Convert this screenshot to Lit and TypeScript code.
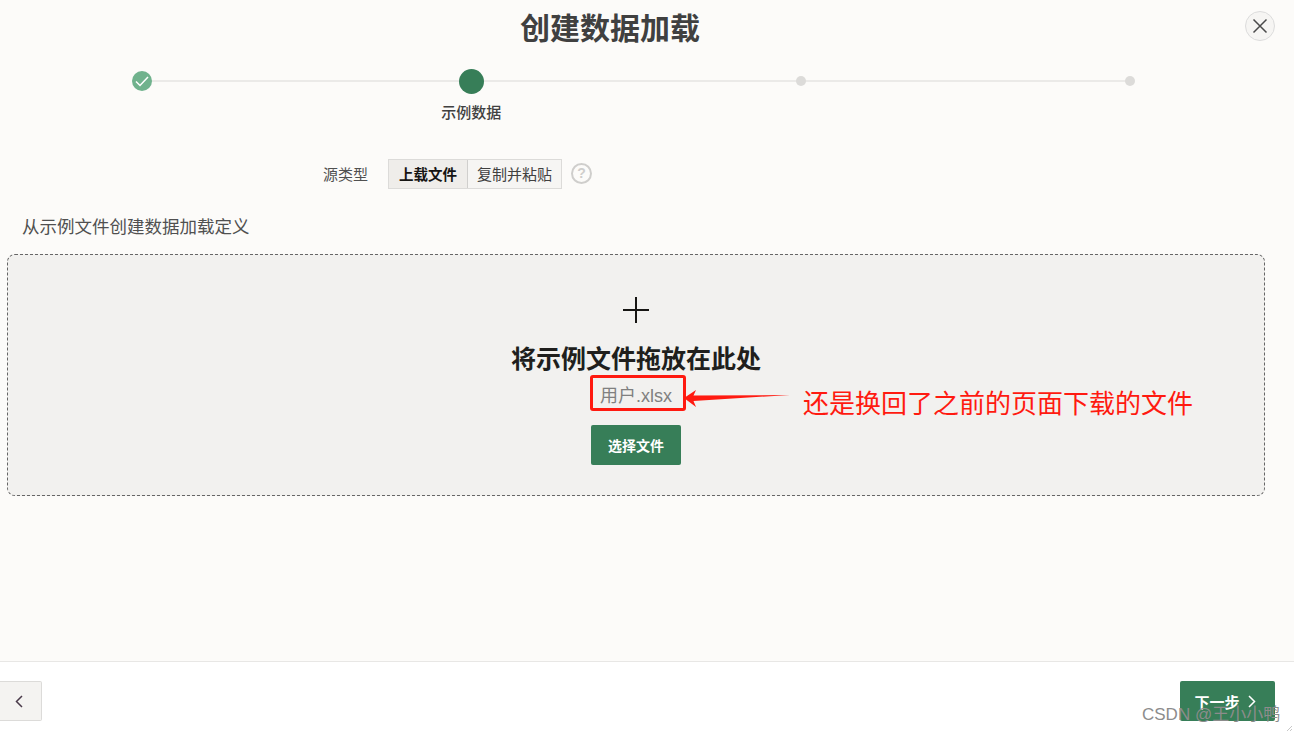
import { LitElement, html, css } from 'lit';
import { customElement } from 'lit/decorators.js';

@customElement('app-root')
export class AppRoot extends LitElement {
  static styles = css`
    :host {
      display: flex;
      flex-direction: column;
      width: 1294px;
      height: 733px;
      overflow: hidden;
      position: relative;
      background: #fcfbf9;
      color: #404040;
      font-family: "Liberation Sans", "Noto Sans CJK SC", sans-serif;
    }
    * { box-sizing: border-box; }
    .main { flex: 1; display: flex; flex-direction: column; min-height: 0; }

    .header { height: 58px; display: flex; align-items: flex-start; padding: 9px 19px 0 0; }
    .title { flex: 1; margin: 0; text-align: center; font-size: 30px; line-height: 40px; font-weight: 700; color: #404040; padding-right: 25px; }
    .close { width: 30px; height: 30px; margin-top: 2px; border: 1px solid #dcdcdc; border-radius: 50%; background: #f6f5f3; display: flex; align-items: center; justify-content: center; padding: 0; }

    .stepper { margin: 9px 0 0 129px; width: 1014px; height: 74px; display: grid; grid-template-columns: 26px 1fr 26px 1fr 26px 1fr 26px; grid-template-rows: 28px auto; align-items: center; justify-items: center; align-content: start; }
    .rail { grid-column: 1 / -1; grid-row: 1; justify-self: stretch; margin: 0 13px; height: 2px; background: #ebeae8; }
    .stepper > span:not(.rail):not(.step-label) { grid-row: 1; }
    .p1 { grid-column: 1; }
    .p2 { grid-column: 3; }
    .p3 { grid-column: 5; }
    .p4 { grid-column: 7; }
    .dot { width: 10px; height: 10px; border-radius: 50%; background: #dcdbd9; }
    .done { width: 20px; height: 20px; border-radius: 50%; background: #70b28d; display: flex; align-items: center; justify-content: center; }
    .current { width: 25px; height: 25px; border-radius: 50%; background: #377e58; }
    .step-label { grid-column: 3; grid-row: 2; width: 0; display: flex; justify-content: center; white-space: nowrap; font-size: 15px; line-height: 20px; font-weight: 500; color: #404040; margin-top: 8px; }

    .source { display: flex; align-items: center; height: 30px; margin-top: 18px; padding-left: 323px; }
    .source-label { font-size: 15px; width: 65px; color: #505050; padding-bottom: 2px; }
    .toggle { display: flex; height: 30px; border: 1px solid #dcdbd9; }
    .toggle span { display: flex; align-items: center; justify-content: center; font-size: 15px; padding-bottom: 2px; }
    .toggle .on { width: 79px; background: #efedea; color: #161513; font-weight: 700; font-size: 14.5px; border-right: 1px solid #d0cfcd; }
    .toggle .off { width: 93px; background: #f6f5f3; color: #404040; }
    .help { margin: -2px 0 0 9px; width: 21px; height: 21px; border: 2px solid #cfcecc; border-radius: 50%; display: flex; align-items: center; justify-content: center; font-size: 14px; font-weight: 700; color: #cfcecc; }

    .hint { margin: 26px 0 0 22px; font-size: 17.5px; line-height: 24px; color: #505050; }

    .drop { margin: 15px 0 0 7px; width: 1258px; height: 242px; background: #f2f1ef; border: 1px dashed #666; border-radius: 8px; display: flex; flex-direction: column; align-items: center; padding: 42px 0 0 0; }
    .plus { display: block; width: 26px; height: 26px; }
    .drop h2 { margin: 21px 0 0; font-size: 25px; line-height: 30px; font-weight: 700; color: #201f1d; }
    .file { margin: 1px 0 0 4px; width: 96px; height: 36px; border: 3px solid #ff1a10; border-radius: 3px; display: flex; align-items: center; justify-content: center; font-size: 18px; color: #808080; padding: 2px 4px 0 0; }
    .pick { margin-top: 14px; width: 90px; height: 40px; border: 0; border-radius: 2px; background: #377e58; color: #fff; font: 700 14px "Liberation Sans", "Noto Sans CJK SC", sans-serif; }

    .footer { height: 72px; flex: none; background: #fff; border-top: 1px solid #e8e7e5; display: flex; align-items: flex-start; justify-content: space-between; padding: 19px 19px 0 0; }
    .back { width: 42px; height: 40px; background: #f4f3f1; border: 1px solid #dcdbd9; border-left: 0; border-radius: 0 2px 2px 0; display: flex; align-items: center; justify-content: center; padding: 0 4px 0 0; }
    .next { width: 95px; height: 40px; border: 0; border-radius: 2px; background: #377e58; color: #fff; display: flex; align-items: center; justify-content: center; gap: 8px; font: 700 15px "Liberation Sans", "Noto Sans CJK SC", sans-serif; padding: 0 5px 0 0; }

    .note { position: absolute; left: 682px; top: 385px; display: flex; align-items: center; color: #ff1a10; font-size: 26px; line-height: 38px; white-space: nowrap; }
    .note svg { display: block; margin: 0 12px 12px 0; }
    .mark { position: absolute; left: 1142px; top: 703px; font-size: 17px; line-height: 24px; color: #8c8c8c; white-space: nowrap; }
    .grip { position: absolute; right: 1px; bottom: 1px; }
  `;

  render() {
    return html`
      <div class="main">
        <div class="header">
          <h1 class="title">创建数据加载</h1>
          <button class="close">
            <svg width="16" height="16" viewBox="0 0 16 16"><path d="M1.5 1.5l13 13M14.5 1.5l-13 13" stroke="#4a4a4a" stroke-width="1.5" fill="none"/></svg>
          </button>
        </div>

        <div class="stepper">
          <span class="rail"></span>
          <span class="done p1">
            <svg width="14" height="12" viewBox="0 0 14 12"><path d="M1 6.500l4 4L13 2" stroke="#fff" stroke-width="1.500" fill="none"/></svg>
          </span>
          <span class="current p2"></span>
          <span class="dot p3"></span>
          <span class="dot p4"></span>
          <span class="step-label">示例数据</span>
        </div>

        <div class="source">
          <span class="source-label">源类型</span>
          <div class="toggle"><span class="on">上载文件</span><span class="off">复制并粘贴</span></div>
          <span class="help">?</span>
        </div>

        <div class="hint">从示例文件创建数据加载定义</div>

        <div class="drop">
          <svg class="plus" viewBox="0 0 26 26"><path d="M13 0v26M0 13h26" stroke="#161513" stroke-width="2" fill="none"/></svg>
          <h2>将示例文件拖放在此处</h2>
          <div class="file">用户.xlsx</div>
          <button class="pick">选择文件</button>
        </div>
      </div>

      <div class="footer">
        <button class="back">
          <svg width="8" height="13" viewBox="0 0 8 13"><path d="M7 1L1.500 6.500l5.500 5.500" stroke="#4a3a4a" stroke-width="1.500" fill="none"/></svg>
        </button>
        <button class="next">下一步
          <svg width="8" height="13" viewBox="0 0 8 13"><path d="M1 1l5.500 5.500L1 12" stroke="#fff" stroke-width="1.500" fill="none"/></svg>
        </button>
      </div>

      <div class="note">
        <svg width="109" height="20" viewBox="0 0 109 20"><path d="M2 10L14 2L11.500 7.500L108 7L11.500 13L14 19Z" fill="#ff1a10"/></svg>
        还是换回了之前的页面下载的文件
      </div>
      <div class="mark">CSDN @王小小鸭</div>
      <svg class="grip" width="7" height="7" viewBox="0 0 7 7"><path d="M1 6l5-5M4 6l2-2" stroke="#c8c8c8" stroke-width="1" fill="none"/></svg>
    `;
  }
}
